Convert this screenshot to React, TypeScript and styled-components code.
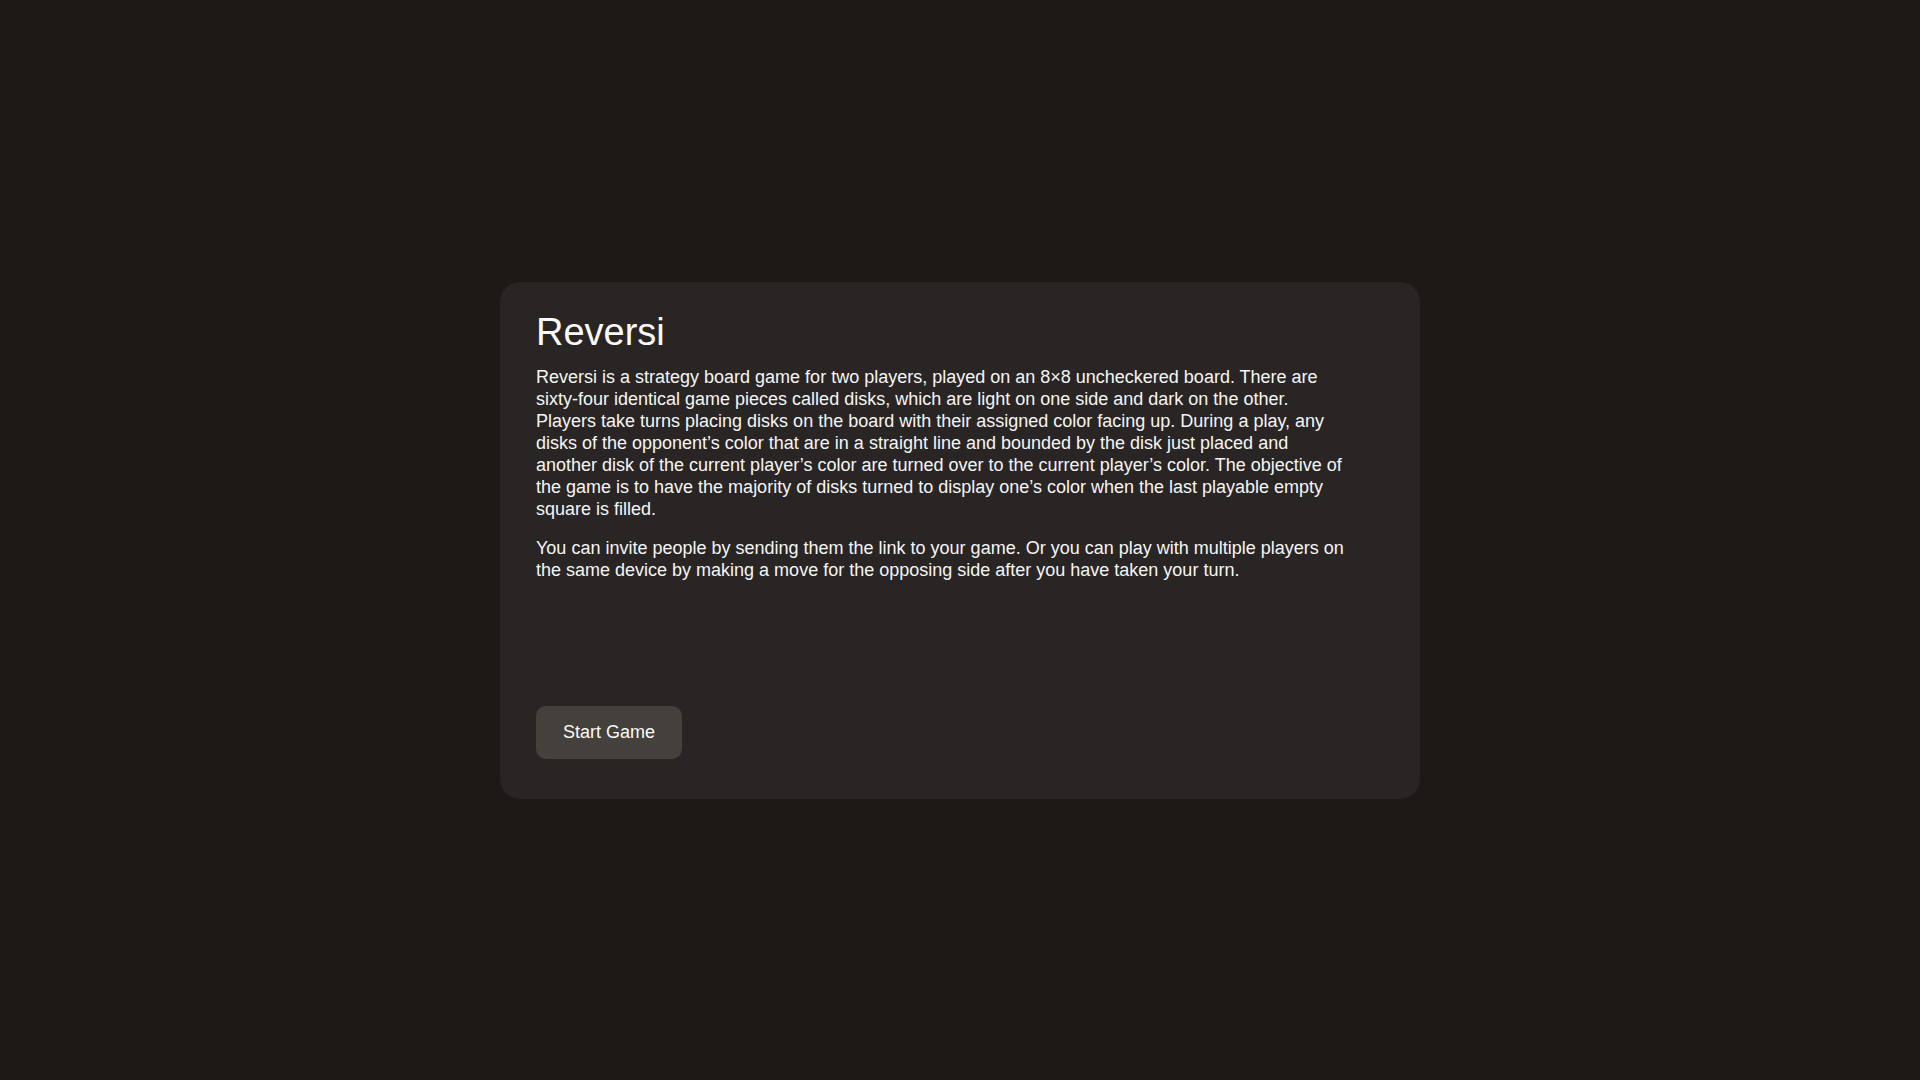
import React from 'react'
import styled, { createGlobalStyle } from 'styled-components'

const GlobalStyle = createGlobalStyle`
  html, body {
    margin: 0;
    padding: 0;
    background: #1c1917;
  }
  body {
    font-family: "Liberation Sans", Arial, Helvetica, sans-serif;
    color: #f5f5f4;
  }
`

const Page = styled.main`
  min-height: 100vh;
  display: flex;
  align-items: center;
  justify-content: center;
`

const Card = styled.section`
  box-sizing: border-box;
  width: 920px;
  height: 517px;
  padding: 26px 36px 40px;
  background: #292524;
  border-radius: 20px;
  display: flex;
  flex-direction: column;
`

const Title = styled.h1`
  margin: 0 0 10px;
  font-size: 38px;
  line-height: 48px;
  font-weight: 400;
  color: #fafaf9;
`

const Text = styled.p`
  margin: 0 0 17px;
  max-width: 814px;
  font-size: 18px;
  line-height: 22px;
  color: #f5f5f4;
`

const Actions = styled.div`
  margin-top: auto;
  display: flex;
`

const Button = styled.button`
  height: 53px;
  padding: 0 27px;
  border: none;
  border-radius: 10px;
  background: #44403c;
  color: #fafaf9;
  font-family: inherit;
  font-size: 18px;
  cursor: pointer;
`

const App = () => {
  return (
    <>
      <GlobalStyle />
      <Page>
        <Card>
          <Title>Reversi</Title>
          <Text>
            Reversi is a strategy board game for two players, played on an 8×8 uncheckered board. There are
            sixty-four identical game pieces called disks, which are light on one side and dark on the other.
            Players take turns placing disks on the board with their assigned color facing up. During a play, any
            disks of the opponent’s color that are in a straight line and bounded by the disk just placed and
            another disk of the current player’s color are turned over to the current player’s color. The
            objective of the game is to have the majority of disks turned to display one’s color when the last
            playable empty square is filled.
          </Text>
          <Text>
            You can invite people by sending them the link to your game. Or you can play with multiple players on
            the same device by making a move for the opposing side after you have taken your turn.
          </Text>
          <Actions>
            <Button>Start Game</Button>
          </Actions>
        </Card>
      </Page>
    </>
  )
}

export default App
